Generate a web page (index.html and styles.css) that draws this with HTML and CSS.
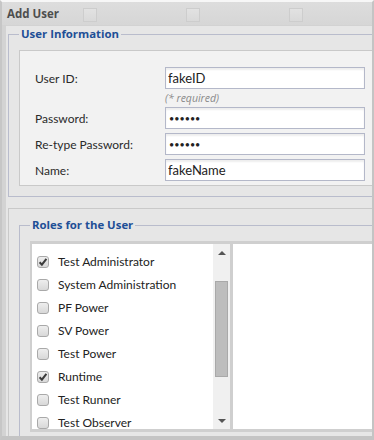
FILE: index.html
```html
<!DOCTYPE html>
<html>
<head>
<meta charset="utf-8">
<link rel="stylesheet" href="styles.css">
</head>
<body>
<div class="window">
  <div class="titlebar">
    <span class="title">Add User</span>
    <span class="ph"></span>
    <span class="ph"></span>
    <span class="ph"></span>
  </div>
  <div class="content">
    <fieldset class="fs info">
      <legend>User Information</legend>
      <div class="panel">
        <div class="form-grid">
          <label class="lbl">User ID:</label>
          <input class="inp" type="text" value="fakeID">
          <span></span>
          <span class="note">(* required)</span>
          <label class="lbl">Password:</label>
          <input class="inp pw" type="password" value="secret">
          <label class="lbl">Re-type Password:</label>
          <input class="inp pw" type="password" value="secret">
          <label class="lbl">Name:</label>
          <input class="inp" type="text" value="fakeName">
        </div>
      </div>
    </fieldset>
    <div class="section2">
      <fieldset class="fs roles">
        <legend>Roles for the User</legend>
        <div class="listwrap">
          <div class="list">
            <ul class="items">
              <li class="item"><span class="cb checked"><svg viewBox="0 0 12 12" width="12" height="12"><path d="M2.6 6.2 L4.9 8.6 L9.4 2.8" fill="none" stroke="#3c3c3c" stroke-width="2"/></svg></span>Test Administrator</li>
              <li class="item"><span class="cb"></span>System Administration</li>
              <li class="item"><span class="cb"></span>PF Power</li>
              <li class="item"><span class="cb"></span>SV Power</li>
              <li class="item"><span class="cb"></span>Test Power</li>
              <li class="item"><span class="cb checked"><svg viewBox="0 0 12 12" width="12" height="12"><path d="M2.6 6.2 L4.9 8.6 L9.4 2.8" fill="none" stroke="#3c3c3c" stroke-width="2"/></svg></span>Runtime</li>
              <li class="item"><span class="cb"></span>Test Runner</li>
              <li class="item"><span class="cb"></span>Test Observer</li>
            </ul>
            <div class="scrollbar">
              <span class="arrow up"></span>
              <div class="track"><div class="thumb"></div></div>
              <span class="arrow down"></span>
            </div>
          </div>
          <div class="assigned"></div>
        </div>
      </fieldset>
    </div>
  </div>
</div>
</body>
</html>
```
FILE: styles.css
```css
html, body {
  margin: 0;
  padding: 0;
}
body {
  width: 374px;
  height: 440px;
  overflow: hidden;
  font-family: "Lato", "Liberation Sans", sans-serif;
  font-size: 12px;
  color: #222;
}
.window {
  width: 374px;
  height: 440px;
  box-sizing: border-box;
  border-top: 2px solid #f7f7f7;
  border-left: 2px solid #c6c6c6;
  border-right: 2px solid #c4c4c4;
  border-bottom: 4px solid #c4c4c4;
  background: #e6e6e6;
  display: flex;
  flex-direction: column;
  overflow: hidden;
}
.titlebar {
  height: 23px;
  flex: none;
  border-bottom: 1px solid #d2d2d2;
  background: linear-gradient(#dddddd, #d6d6d6);
  display: flex;
  align-items: center;
  padding-left: 5px;
}
.title {
  width: 76px;
  flex: none;
  font-family: "Open Sans", "Liberation Sans", sans-serif;
  font-weight: bold;
  font-size: 11.5px;
  color: #4e4e4e;
}
.ph {
  width: 12px;
  height: 12px;
  flex: none;
  border: 1px solid #cdcdcd;
  background: linear-gradient(#e2e2e2, #d9d9d9);
  margin-right: 89px;
  margin-top: 2px;
}
.content {
  flex: 1;
  min-height: 0;
  overflow: hidden;
  border-left: 4px solid #d3d3d3;
  padding-left: 2px;
}
.fs {
  margin: 0;
  border: 1px solid #b9bccc;
  padding: 8px 0 10px 10px;
  width: 420px;
  min-width: 0;
}
.fs legend {
  padding: 0 2px;
  height: 16px;
  line-height: 16px;
  font-family: "Open Sans", "Liberation Sans", sans-serif;
  font-weight: bold;
  font-size: 11.4px;
  color: #1e4f96;
}
.panel {
  border: 1px solid #c9c9c9;
  background: #f2f2f2;
  padding: 16px 0 4px 15px;
}
.form-grid {
  display: grid;
  grid-template-columns: 130px 200px;
  grid-template-rows: 22px 10px 22px 22px 22px;
  row-gap: 4px;
  align-items: center;
}
.lbl {
  font-size: 12px;
  color: #2a2a2a;
}
.inp {
  box-sizing: border-box;
  width: 200px;
  height: 22px;
  margin: 0;
  border: 1px solid #b4b8c9;
  background: #fff;
  box-shadow: inset 0 2px 2px rgba(0,0,0,0.07);
  padding: 0 2px;
  font-family: "Lato", "Liberation Sans", sans-serif;
  font-size: 13px;
  color: #222;
  outline: none;
}
.inp.pw {
  font-size: 9px;
  padding-left: 3px;
}
.note {
  font-family: "Open Sans", "Liberation Sans", sans-serif;
  font-style: italic;
  font-size: 10.5px;
  color: #8a8a8a;
  line-height: 10px;
}
.section2 {
  margin-top: 11px;
  border-top: 1px solid #c9c9c9;
  border-left: 1px solid #c9c9c9;
  padding: 8px 0 0 10px;
  width: 440px;
}
.roles {
  padding: 8px 0 20px 10px;
}
.listwrap {
  display: flex;
  background: #cfcfcf;
  padding: 3px 0 3px 2px;
  height: 185px;
  gap: 3px;
}
.list {
  display: flex;
  width: 198px;
  background: #fff;
  flex: none;
}
.items {
  list-style: none;
  margin: 0;
  padding: 6px 0 0 5px;
  flex: 1;
  overflow: hidden;
}
.item {
  height: 23px;
  display: flex;
  align-items: center;
  font-size: 12px;
  color: #222;
  white-space: nowrap;
}
.cb {
  box-sizing: border-box;
  width: 12px;
  height: 12px;
  flex: none;
  border: 1px solid #a9a9a9;
  border-radius: 3px;
  background: linear-gradient(#eeeeee, #d8d8d8);
  margin-right: 9px;
  display: flex;
  align-items: center;
  justify-content: center;
}
.cb svg {
  display: block;
  flex: none;
}
.scrollbar {
  width: 17px;
  flex: none;
  background: #f0f0f0;
  display: flex;
  flex-direction: column;
  align-items: center;
}
.arrow {
  width: 0;
  height: 0;
  border-left: 4px solid transparent;
  border-right: 4px solid transparent;
  flex: none;
}
.arrow.up {
  border-bottom: 4px solid #555;
  margin-top: 7px;
}
.arrow.down {
  border-top: 4px solid #555;
  margin-bottom: 6px;
}
.track {
  flex: 1;
  width: 100%;
  display: flex;
  justify-content: center;
}
.thumb {
  box-sizing: border-box;
  width: 13px;
  height: 96px;
  margin-top: 26px;
  background: #bdbdbd;
  border: 1px solid #a9a9a9;
}
.assigned {
  flex: 1;
  background: #fff;
}
```
